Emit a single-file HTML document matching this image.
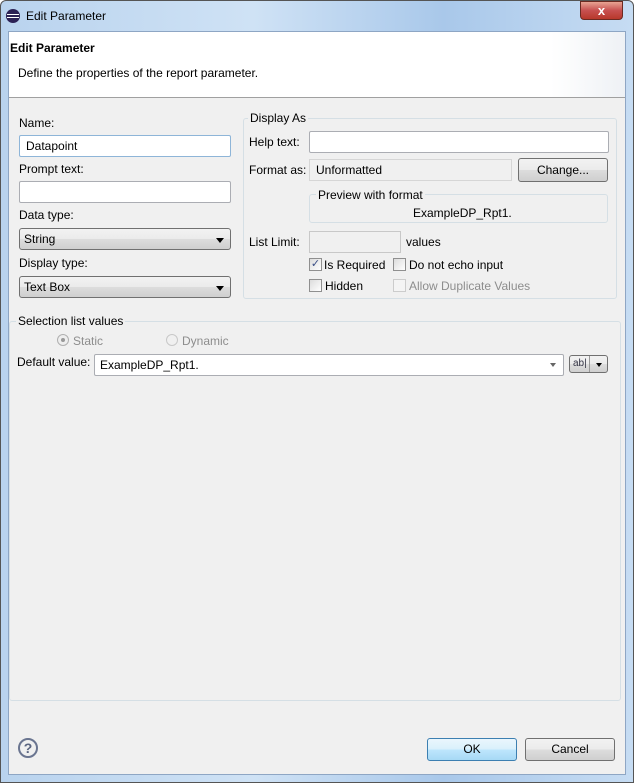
<!DOCTYPE html><html><head><style>
*{box-sizing:border-box}
body{margin:0;width:634px;height:783px;overflow:hidden;font-family:"Liberation Sans",sans-serif;font-size:12px;color:#000;background:#fff}
.a{position:absolute}
.frame{left:0;top:0;width:634px;height:783px;background:linear-gradient(90deg,#b9d3ee,#cfe2f5 40%,#a9c8ea 70%,#c6dcf3);border:1px solid #555;border-radius:6px 6px 0 0}
.client{left:8px;top:31px;width:618px;height:744px;background:#f0f0f0;border:1px solid #8ea6c4}
.hdr{left:9px;top:32px;width:616px;height:66px;background:linear-gradient(90deg,#fff 88%,#eef1f5);border-bottom:1px solid #a0a0a0}
.in{background:#fff;border:1px solid #abadb3;border-radius:2px;height:22px}
.dis{background:#f0f0f0;border:1px solid #d6d6d6;height:22px}
.combo{border:1px solid #707070;border-radius:3px;background:linear-gradient(#f2f2f2,#ebebeb 50%,#dddddd 50%,#cfcfcf);height:22px;padding:3px 4px}
.combo:after{content:"";position:absolute;right:6px;top:9px;border:4px solid transparent;border-top:5px solid #000}
.btn{border:1px solid #707070;border-radius:3px;background:linear-gradient(#f2f2f2,#ebebeb 50%,#dddddd 50%,#cfcfcf);text-align:center;line-height:21px}
.grp{border:1px solid #d5dfe5;border-radius:3px}
.leg{background:#f0f0f0;padding:0 2px}
.cb{width:13px;height:13px;border:1px solid #8f8f8f;background:linear-gradient(135deg,#dcdcdc,#fff)}
</style></head><body>
<div class="a frame"></div>
<div class="a" style="left:6px;top:9px;width:14px;height:14px;border-radius:50%;background:#2c2255"><div class="a" style="left:1px;top:5px;width:12px;height:1px;background:#fff"></div><div class="a" style="left:1px;top:8px;width:12px;height:1px;background:#fff"></div></div>
<div class="a" style="left:26px;top:9px;font-size:12px">Edit Parameter</div>
<div class="a" style="left:580px;top:1px;width:43px;height:19px;border-radius:0 0 4px 4px;background:linear-gradient(#e8a493,#c75050 50%,#b8382b);border:1px solid #6b2a22;color:#fff;font-weight:bold;text-align:center;line-height:17px;font-size:13px">x</div>
<div class="a client"></div>
<div class="a hdr"></div>
<div class="a" style="left:10px;top:41px;font-weight:bold;font-size:12px">Edit Parameter</div>
<div class="a" style="left:18px;top:66px">Define the properties of the report parameter.</div>

<div class="a" style="left:19px;top:116px">Name:</div>
<div class="a in" style="left:19px;top:135px;width:212px;border-color:#8eb5d8;padding:3px 6px">Datapoint</div>
<div class="a" style="left:19px;top:162px">Prompt text:</div>
<div class="a in" style="left:19px;top:181px;width:212px"></div>
<div class="a" style="left:19px;top:208px">Data type:</div>
<div class="a combo" style="left:19px;top:228px;width:212px">String</div>
<div class="a" style="left:19px;top:256px">Display type:</div>
<div class="a combo" style="left:19px;top:276px;width:212px">Text Box</div>

<div class="a grp" style="left:243px;top:118px;width:374px;height:181px"></div>
<div class="a leg" style="left:248px;top:111px">Display As</div>
<div class="a" style="left:249px;top:135px">Help text:</div>
<div class="a in" style="left:309px;top:131px;width:300px"></div>
<div class="a" style="left:249px;top:163px">Format as:</div>
<div class="a dis" style="left:309px;top:159px;width:203px;padding:3px 6px">Unformatted</div>
<div class="a btn" style="left:518px;top:158px;width:90px;height:24px;line-height:23px">Change...</div>
<div class="a grp" style="left:309px;top:194px;width:299px;height:29px"></div>
<div class="a leg" style="left:316px;top:188px">Preview with format</div>
<div class="a" style="left:413px;top:206px">ExampleDP_Rpt1.</div>
<div class="a" style="left:249px;top:235px">List Limit:</div>
<div class="a dis" style="left:309px;top:231px;width:92px;border-color:#c8c8c8"></div>
<div class="a" style="left:406px;top:235px">values</div>
<div class="a cb" style="left:309px;top:258px;font-size:11px;line-height:11px;color:#3b4f86;text-align:center">✓</div>
<div class="a" style="left:324px;top:258px">Is Required</div>
<div class="a cb" style="left:393px;top:258px"></div>
<div class="a" style="left:409px;top:258px">Do not echo input</div>
<div class="a cb" style="left:309px;top:279px"></div>
<div class="a" style="left:325px;top:279px">Hidden</div>
<div class="a cb" style="left:393px;top:279px;border-color:#ccc;background:#f4f4f4"></div>
<div class="a" style="left:409px;top:279px;color:#8d8d8d">Allow Duplicate Values</div>

<div class="a grp" style="left:9px;top:321px;width:612px;height:380px"></div>
<div class="a leg" style="left:16px;top:314px">Selection list values</div>
<div class="a" style="left:57px;top:334px;width:12px;height:12px;border-radius:50%;border:1px solid #b0b0b0;background:#eee"><div class="a" style="left:3px;top:3px;width:4px;height:4px;border-radius:50%;background:#999"></div></div>
<div class="a" style="left:73px;top:334px;color:#8d8d8d">Static</div>
<div class="a" style="left:166px;top:334px;width:12px;height:12px;border-radius:50%;border:1px solid #c8c8c8;background:#f0f0f0"></div>
<div class="a" style="left:182px;top:334px;color:#8d8d8d">Dynamic</div>
<div class="a" style="left:17px;top:355px">Default value:</div>
<div class="a in" style="left:94px;top:354px;width:470px;padding:3px 5px">ExampleDP_Rpt1.</div>
<div class="a" style="left:550px;top:363px;border:3px solid transparent;border-top:4px solid #666"></div>
<div class="a btn" style="left:569px;top:355px;width:39px;height:18px;font-size:10px;line-height:16px;text-align:left;padding-left:3px;color:#334">ab|</div>
<div class="a" style="left:589px;top:356px;width:1px;height:16px;background:#999"></div>
<div class="a" style="left:596px;top:363px;border:3px solid transparent;border-top:4px solid #000"></div>

<div class="a" style="left:18px;top:738px;width:20px;height:20px;border-radius:50%;border:2px solid #6a7590;color:#5a6580;font-weight:bold;text-align:center;line-height:16px;font-size:14px">?</div>
<div class="a btn" style="left:427px;top:738px;width:90px;height:23px;border-color:#3c7fb1;background:linear-gradient(#eaf6fd,#d9f0fc 50%,#bee6fd 50%,#a7d9f5)">OK</div>
<div class="a btn" style="left:525px;top:738px;width:90px;height:23px">Cancel</div>
</body></html>
